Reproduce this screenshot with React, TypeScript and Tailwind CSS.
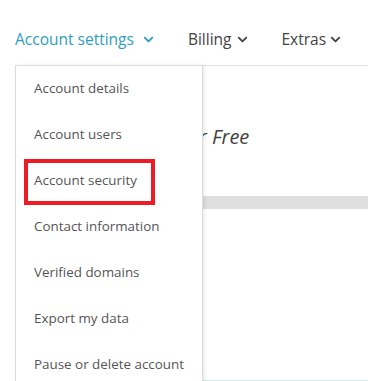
import React from "react";
import { ChevronDown } from "lucide-react";

const menuItems = [
  "Account details",
  "Account users",
  "Account security",
  "Contact information",
  "Verified domains",
  "Export my data",
  "Pause or delete account",
];

function NavItem({
  label,
  active,
  gapClass,
}: {
  label: string;
  active?: boolean;
  gapClass: string;
}) {
  return (
    <div
      className={
        "flex items-center whitespace-nowrap " +
        gapClass +
        (active ? " text-[#2f9ec0]" : " text-[#444]")
      }
    >
      <span>{label}</span>
      <ChevronDown size={15} strokeWidth={3} className="mt-[1px]" />
    </div>
  );
}

export default function App() {
  return (
    <div
      className="relative w-[368px] h-[381px] overflow-hidden bg-white"
      style={{ fontFamily: "'Open Sans', 'Liberation Sans', sans-serif" }}
    >
      {/* top nav */}
      <div className="flex items-center gap-[32px] pl-[15px] pt-[28px] h-[49px] text-[15.5px] leading-[22px]">
        <NavItem label="Account settings" active gapClass="gap-[7px]" />
        <NavItem label="Billing" gapClass="gap-[3px]" />
        <NavItem label="Extras" gapClass="gap-[2px]" />
      </div>

      {/* page content behind the menu */}
      <div className="ml-[15px] mt-[16px] border-t border-l border-[#ddd] h-[316px] flex flex-col">
        <div className="h-[57px] shrink-0" />
        <div className="pl-[125px] text-[20px] italic text-[#444] leading-[28px] whitespace-nowrap">
          Forever Free
        </div>
        <div className="h-[45px] shrink-0" />
        <div className="h-[13px] shrink-0 bg-[#dedede]" />
        <div className="flex-1" />
        <div className="h-[1px] shrink-0 bg-[#cdeee6]" />
      </div>

      {/* dropdown menu */}
      <div className="absolute left-[15px] top-[65px] w-[188px] h-[330px] bg-white border border-[#ddd] shadow-[2px_0_3px_rgba(0,0,0,0.08)]">
        <div className="-mt-[1px]">
          {menuItems.map((item) => (
            <div
              key={item}
              className="h-[46px] flex items-center pl-[18px] text-[13.4px] text-[#555] whitespace-nowrap"
            >
              {item}
            </div>
          ))}
        </div>
      </div>

      {/* highlight box */}
      <div className="absolute left-[24px] top-[159px] w-[131px] h-[46px] border-4 border-[#ed1c24]" />
    </div>
  );
}
